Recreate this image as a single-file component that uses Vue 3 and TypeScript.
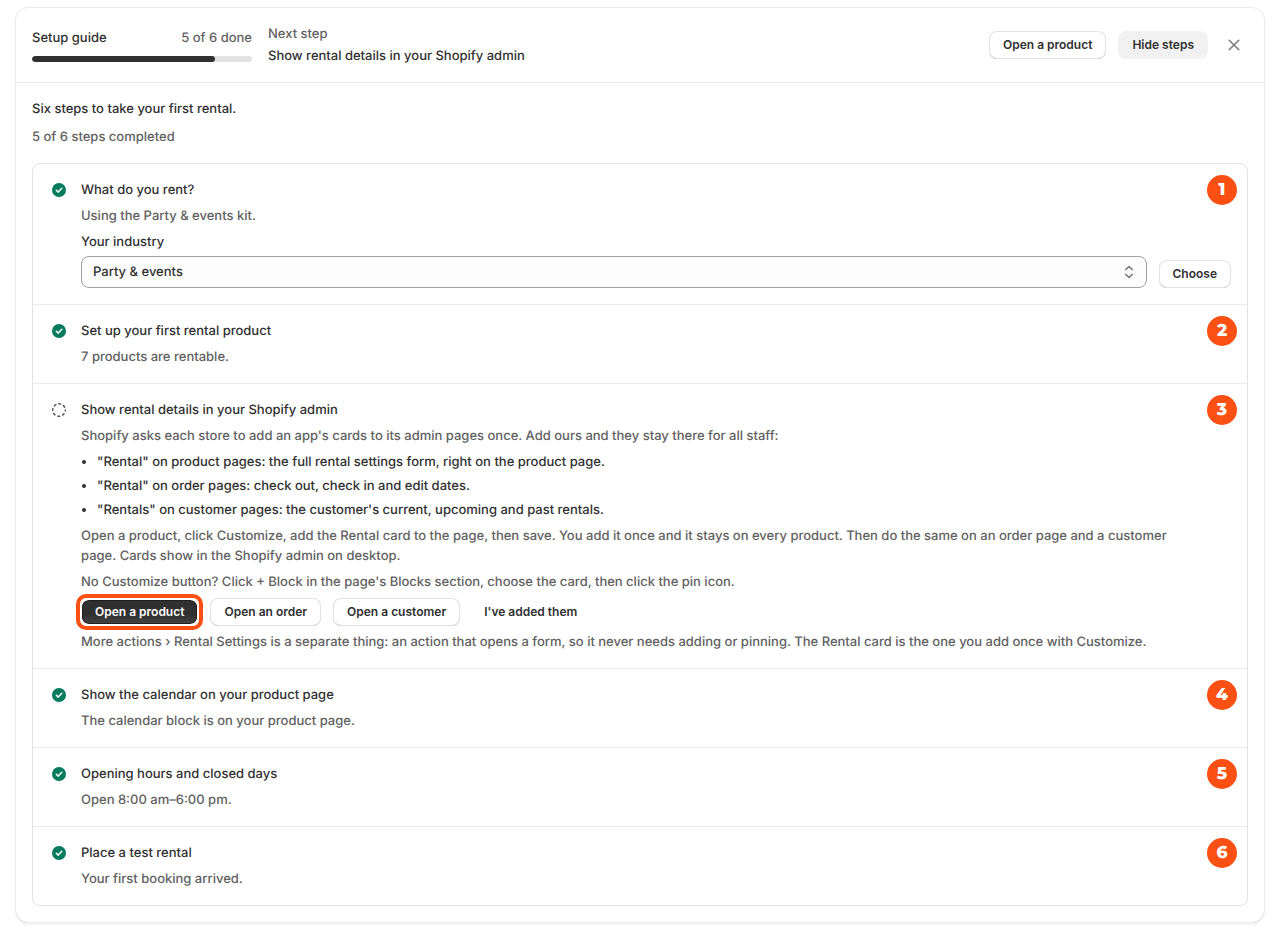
<script setup lang="ts">
import { computed, ref } from 'vue'

interface Step {
  id: number
  title: string
  desc: string
  done: boolean
}

const steps: Step[] = [
  { id: 1, title: 'What do you rent?', desc: 'Using the Party & events kit.', done: true },
  { id: 2, title: 'Set up your first rental product', desc: '7 products are rentable.', done: true },
  {
    id: 3,
    title: 'Show rental details in your Shopify admin',
    desc: "Shopify asks each store to add an app's cards to its admin pages once. Add ours and they stay there for all staff:",
    done: false,
  },
  { id: 4, title: 'Show the calendar on your product page', desc: 'The calendar block is on your product page.', done: true },
  { id: 5, title: 'Opening hours and closed days', desc: 'Open 8:00 am–6:00 pm.', done: true },
  { id: 6, title: 'Place a test rental', desc: 'Your first booking arrived.', done: true },
]

const cards: string[] = [
  '"Rental" on product pages: the full rental settings form, right on the product page.',
  '"Rental" on order pages: check out, check in and edit dates.',
  '"Rentals" on customer pages: the customer\'s current, upcoming and past rentals.',
]

const industry = ref('Party & events')
const doneCount = computed(() => steps.filter((s) => s.done).length)
const progress = computed(() => (doneCount.value / steps.length) * 100)
</script>

<template>
  <main class="page">
    <section class="card">
      <header class="head">
        <div class="guide">
          <div class="guide-row">
            <span>Setup guide</span>
            <span class="muted">{{ doneCount }} of {{ steps.length }} done</span>
          </div>
          <div class="track" role="progressbar" aria-label="Setup progress" :aria-valuenow="doneCount" aria-valuemin="0" :aria-valuemax="steps.length">
            <div class="fill" :style="{ width: progress + '%' }"></div>
          </div>
        </div>
        <div class="next">
          <span class="muted">Next step</span>
          <span>Show rental details in your Shopify admin</span>
        </div>
        <div class="head-actions">
          <button type="button" class="btn">Open a product</button>
          <button type="button" class="btn soft">Hide steps</button>
          <button type="button" class="close" aria-label="Dismiss">
            <svg viewBox="0 0 20 20" width="20" height="20" fill="none" stroke="#7a7a7a" stroke-width="1.5" stroke-linecap="round">
              <path d="M5.2 5.2l9.6 9.6M14.8 5.2l-9.6 9.6" />
            </svg>
          </button>
        </div>
      </header>

      <div class="body">
        <div class="intro">
          <p>Six steps to take your first rental.</p>
          <p class="muted">{{ doneCount }} of {{ steps.length }} steps completed</p>
        </div>

        <ol class="steps">
          <li v-for="step in steps" :key="step.id" class="step">
            <svg v-if="step.done" class="state" viewBox="0 0 20 20" width="20" height="20">
              <circle cx="10" cy="10" r="7" fill="#047b5d" />
              <path d="M7.3 10.2l1.9 1.9 3.6-3.9" fill="none" stroke="#fff" stroke-width="1.5" stroke-linecap="round" stroke-linejoin="round" />
            </svg>
            <svg v-else class="state" viewBox="0 0 20 20" width="20" height="20">
              <circle cx="10" cy="10" r="6.3" fill="none" stroke="#4a4a4a" stroke-width="1.4" stroke-dasharray="2.9 2.05" stroke-dashoffset="1.45" />
            </svg>

            <div class="content">
              <h3>{{ step.title }}</h3>
              <p class="muted">{{ step.desc }}</p>

              <div v-if="step.id === 1" class="field-row">
                <div class="field">
                  <label for="industry">Your industry</label>
                  <div class="select">
                    <select id="industry" v-model="industry">
                      <option>Party &amp; events</option>
                    </select>
                    <svg viewBox="0 0 20 20" width="20" height="20" fill="none" stroke="#7a7a7a" stroke-width="1.5" stroke-linecap="round" stroke-linejoin="round">
                      <path d="M6.7 7.6L10 4.5l3.3 3.1M6.7 12.4l3.3 3.1 3.3-3.1" />
                    </svg>
                  </div>
                </div>
                <button type="button" class="btn">Choose</button>
              </div>

              <template v-if="step.id === 3">
                <ul class="bullets">
                  <li v-for="card in cards" :key="card">{{ card }}</li>
                </ul>
                <p class="muted">
                  Open a product, click Customize, add the Rental card to the page, then save. You add it once and it
                  stays on every product. Then do the same on an order page and a customer page.&nbsp;Cards show in the
                  Shopify admin on desktop.
                </p>
                <p class="muted">
                  No Customize button? Click + Block in the page's Blocks section, choose the card, then click the pin icon.
                </p>
                <div class="actions">
                  <button type="button" class="btn primary">Open a product</button>
                  <button type="button" class="btn">Open an order</button>
                  <button type="button" class="btn">Open a customer</button>
                  <button type="button" class="btn plain">I've added them</button>
                </div>
                <p class="muted">
                  More actions › Rental Settings is a separate thing: an action that opens a form, so it never needs
                  adding or pinning. The Rental card is the one you add once with Customize.
                </p>
              </template>
            </div>

            <span class="badge">{{ step.id }}</span>
          </li>
        </ol>
      </div>
    </section>
  </main>
</template>

<style>
body {
  background: #fff;
}
</style>

<style scoped>
.page {
  padding: 8px 16px;
  font-family: Inter, 'Liberation Sans', sans-serif;
  font-size: 13px;
  font-weight: 450;
  line-height: 20px;
  color: #303030;
  text-rendering: geometricPrecision;
}
p,
h3,
ul,
ol {
  margin: 0;
  padding: 0;
}
h3 {
  font-size: 13px;
  font-weight: 450;
}
.muted {
  color: #616161;
}
.card {
  border-radius: 12px;
  box-shadow: 0 0 0 1px #ebebeb, 0 1px 0 0 #cccccc, 0 3px 2px #f2f2f2;
}
.head {
  display: flex;
  align-items: center;
  gap: 16px;
  padding: 16px;
  border-bottom: 1px solid #ebebeb;
}
.guide {
  width: 220px;
  display: flex;
  flex-direction: column;
  gap: 8px;
}
.guide-row {
  display: flex;
  justify-content: space-between;
}
.track {
  height: 6px;
  border-radius: 3px;
  background: #e3e3e3;
  overflow: hidden;
}
.fill {
  height: 100%;
  border-radius: 3px;
  background: #303030;
}
.next {
  flex: 1;
  display: flex;
  flex-direction: column;
  gap: 2px;
}
.head-actions,
.actions {
  display: flex;
  align-items: center;
  gap: 12px;
}
.btn {
  height: 28px;
  padding: 0 14px;
  border: 0;
  border-radius: 8px;
  background: #fff;
  color: #303030;
  font: 600 12px/16px Inter, 'Liberation Sans', sans-serif;
  text-rendering: auto;
  white-space: nowrap;
  box-shadow: inset 0 0 0 1px #e3e3e3, inset 0 -1px 0 #b5b5b5;
}
.btn.soft {
  background: #f1f1f1;
  box-shadow: none;
}
.btn.plain {
  padding: 0 12px;
  background: transparent;
  box-shadow: none;
}
.btn.primary {
  position: relative;
  color: #fff;
  background: linear-gradient(#303030 60%, #444) padding-box;
  border: solid #fff;
  border-width: 2px 1px;
  padding: 0 13px;
  box-shadow: inset 0 0 0 1px #1f1f1f;
}
.btn.primary::after {
  content: '';
  position: absolute;
  inset: -6px;
  border: 4px solid #fa5014;
  border-radius: 10px;
}
.close {
  width: 28px;
  height: 28px;
  padding: 4px;
  border: 0;
  background: none;
}
.close svg {
  display: block;
}
.body {
  display: flex;
  flex-direction: column;
  gap: 16px;
  padding: 16px;
}
.intro {
  display: flex;
  flex-direction: column;
  gap: 8px;
}
.steps {
  list-style: none;
  border: 1px solid #e3e3e3;
  border-radius: 8px;
}
.step {
  position: relative;
  display: flex;
  gap: 12px;
  padding: 16px;
}
.step + .step {
  border-top: 1px solid #ebebeb;
}
.state {
  flex: none;
}
.content {
  flex: 1;
  min-width: 0;
  display: flex;
  flex-direction: column;
  gap: 6px;
}
.field-row {
  display: flex;
  align-items: flex-end;
  gap: 12px;
}
.field {
  flex: 1;
  display: flex;
  flex-direction: column;
  gap: 4px;
}
.select {
  position: relative;
}
.select select {
  display: block;
  width: 100%;
  height: 32px;
  padding: 0 32px 0 11px;
  appearance: none;
  border: 1px solid #a0a0a0;
  border-radius: 8px;
  background: #fdfdfd;
  color: #303030;
  font: 450 13px/20px Inter, 'Liberation Sans', sans-serif;
  text-rendering: geometricPrecision;
}
.select svg {
  position: absolute;
  right: 8px;
  top: 6px;
  pointer-events: none;
}
.bullets {
  display: flex;
  flex-direction: column;
  gap: 4px;
  padding-left: 16px;
  list-style: disc;
}
.badge {
  position: absolute;
  top: 11px;
  right: 10px;
  width: 30px;
  height: 30px;
  border-radius: 50%;
  background: #fa5014;
  color: #fff;
  font-family: Montserrat, Inter, sans-serif;
  font-size: 17px;
  font-weight: 800;
  line-height: 31px;
  text-align: center;
}
</style>
